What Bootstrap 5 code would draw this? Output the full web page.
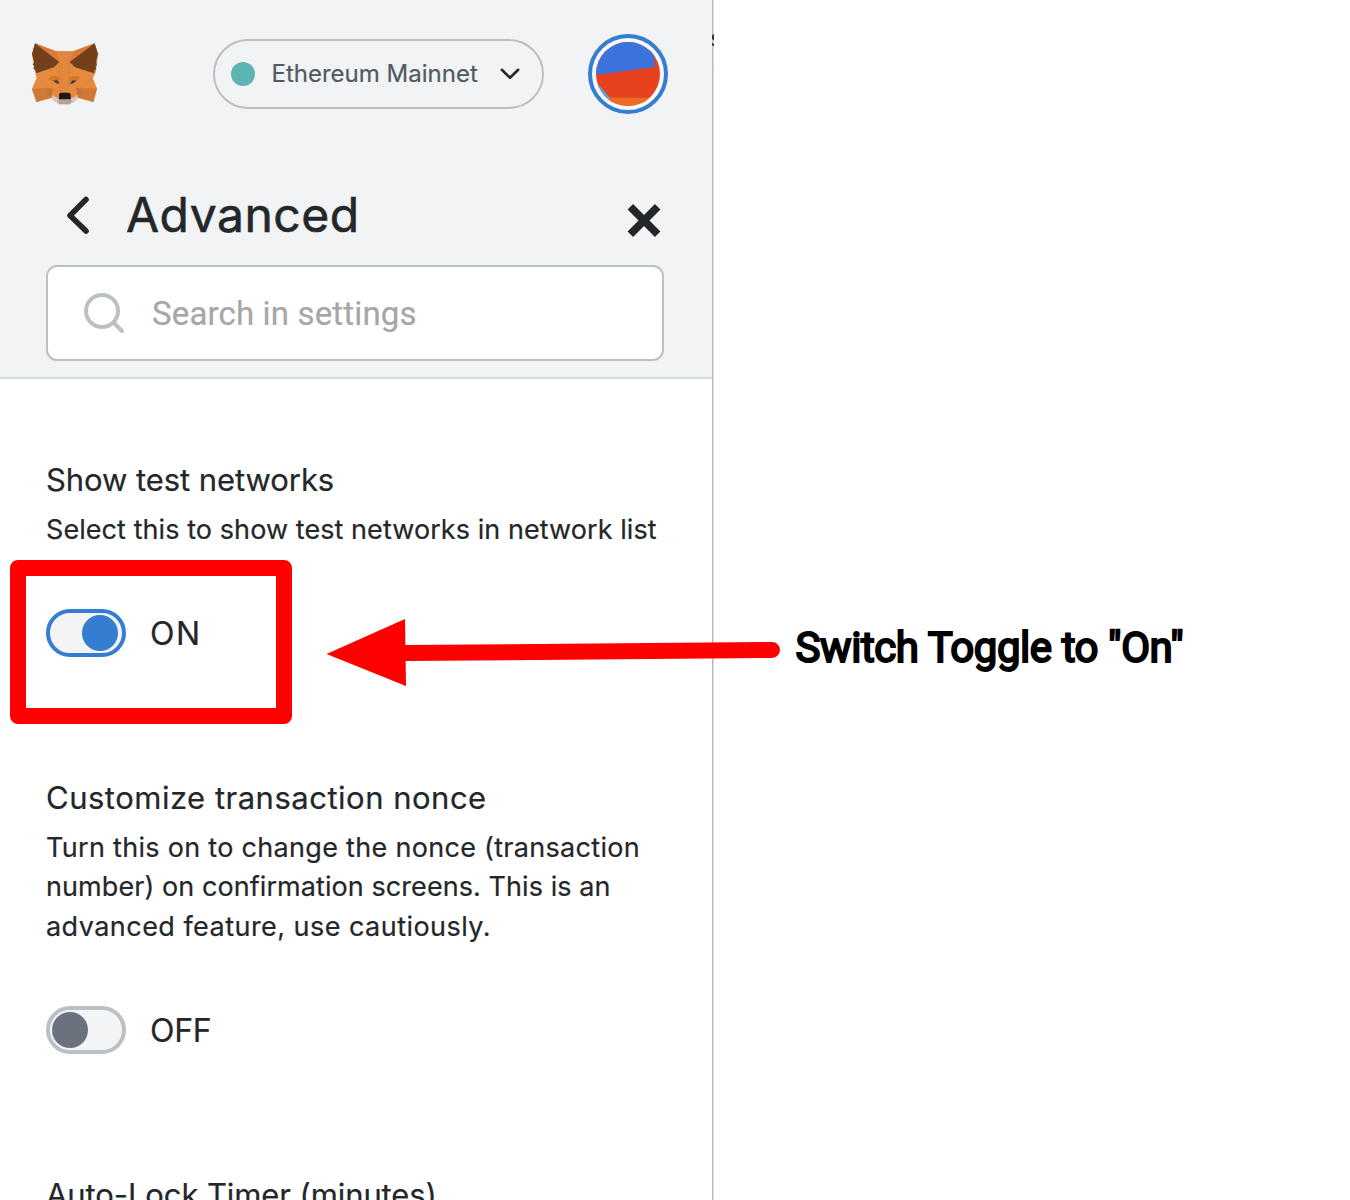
<!DOCTYPE html>
<html lang="en">
<head>
<meta charset="utf-8">
<meta name="viewport" content="width=device-width, initial-scale=1">
<title>Advanced settings</title>
<link rel="stylesheet" href="https://cdn.jsdelivr.net/npm/bootstrap@5.3.0/dist/css/bootstrap.min.css">
<style>
  body { font-family: Inter, sans-serif; color: #24272a; background: #fff; }
  .stage { width: 1350px; height: 1200px; }
  .wallet { width: 714px; height: 1200px; border-right: 1px solid #d8dadc; box-shadow: inset -1px 0 #b9bbbd; -webkit-text-stroke: .2px currentColor; }
  .wallet-head { width: 712px; height: 379px; background: #f2f3f5; border-bottom: 2px solid #d6d9dc; padding: 34px 44px 0 20px; }
  .topbar { height: 80px; }
  .fox-logo { margin-top: 2px; }
  .network { width: 331px; height: 70px; border: 2px solid #bbbec2; margin-left: 103px; padding: 0 22px 0 16px; font-size: 24px; color: #535a61; }
  .net-dot { width: 24px; height: 24px; background: #5cb5b1; }
  .net-name { margin-left: 16.5px; white-space: nowrap; }
  .avatar { width: 80px; height: 80px; }
  .title-row { height: 60px; margin: 71px 4px 0 45px; }
  .title { font-size: 48px; font-weight: 400; letter-spacing: .5px; line-height: 60px; margin: 0 0 0 35px; -webkit-text-stroke: .6px currentColor; }
  .close-x { margin-top: 10px; }
  .search { width: 618px; height: 96px; border: 2px solid #bbc0c5; border-radius: 11px; margin: 20px 0 0 26px; padding-left: 35px; }
  .search-text { font: 400 33px/40px Roboto, sans-serif; color: #a6a6a6; letter-spacing: .15px; margin: 2px 0 0 27px; }
  .setting { padding: 119px 0 0 46px; white-space: nowrap; }
  .setting.first { padding-top: 79px; }
  .setting h2 { font-size: 31px; font-weight: 400; line-height: 44px; margin: 0; letter-spacing: .5px; }
  .desc { font-size: 27px; line-height: 39.5px; margin: 0 0 60px; }
  .first .desc { margin-bottom: 59px; }
  .desc span { display: block; letter-spacing: .46px; }
  .toggle { width: 80px; height: 48px; border: 4px solid #bbc0c5; border-radius: 24px; background: #f2f4f6; padding: 0 2px; }
  .toggle i { width: 36px; height: 36px; border-radius: 50%; background: #6a737d; }
  .toggle.is-on { border-color: #347dd1; padding-right: 4px; }
  .toggle.is-on i { background: #347dd1; }
  .state { font-size: 32px; line-height: 48px; margin-left: 24px; padding-top: 1px; height: 48px; }
  .setting h2.ls-a { letter-spacing: -.07px; } .desc .ls-b { letter-spacing: .07px; } .desc .ls-c { letter-spacing: .3px; }
  .setting h2.ls-d { letter-spacing: -.1px; } .ls-e { letter-spacing: 1.6px; } .ls-f { letter-spacing: -.3px; }
  .notes { padding: 618px 0 0 81.5px; }
  .note-text { font: 400 42px/60px Roboto, sans-serif; color: #000; -webkit-text-stroke: 2px #000; letter-spacing: -.43px; white-space: nowrap; }
  .marker { left: 10px; top: 560px; width: 282px; height: 164px; border: 16px solid #f00; border-radius: 8px; }
  .arrow { left: 320px; top: 610px; }
  .edge-bits { left: 712px; top: 30px; }
</style>
<script src="https://cdn.jsdelivr.net/npm/bootstrap@5.3.0/dist/js/bootstrap.bundle.min.js"></script>
</head>
<body>
<div class="stage d-flex position-relative overflow-hidden">
  <main class="wallet flex-shrink-0 overflow-hidden">
    <header class="wallet-head">
      <div class="topbar d-flex align-items-center">
        <svg class="fox-logo flex-shrink-0" width="90" height="90" viewBox="0 0 270 270" role="img" aria-label="Fox logo">
          <path fill="#e68a3c" d="M45 40L108 64H160L224 40L234 72L227 128L218 144L231 176L220 216L174 203L151 221L116 222L95 203L49 216L36 176L50 144L46 128L36 72Z"/>
          <path fill="#dc7838" d="M45 40L108 64L118 96ZM224 40L160 64L149 96Z"/>
          <path fill="#e08740" d="M108 64H160L149 96L150 140L144 190H123L118 140V96Z"/>
          <path fill="#d27837" d="M36 176L84 174L95 203L49 216ZM231 176L182 174L174 203L220 216Z"/>
          <path fill="#c9733c" d="M84 174H98L95 203L79 194ZM182 174H168L174 203L189 194Z"/>
          <path fill="#d7722f" d="M84 146L94 138L118 140L119 163L84 146ZM182 146L173 138L149 140L147 163L182 146Z"/>
          <path fill="#74401c" d="M45 40L118 96L102 112L49 130L46 120L40 116L43 108L38 105L42 96L36 72ZM224 40L149 96L165 112L222 130L224 120L229 116L226 108L231 105L228 96L234 72Z"/>
          <path fill="#d8c9be" d="M95 195L118 207H151L174 195L170 211L151 223H117L98 211Z"/>
          <path fill="#b5a398" d="M117 207H151L156 212L150 223H118L113 212Z"/>
          <path fill="#191919" d="M122 188H147L152 192V208H117V192Z"/>
          <path fill="#343e49" d="M99 152L112 151L118 163L108 159ZM170 152L157 151L151 163L161 159Z"/>
          <path fill="none" stroke="#c87436" stroke-width="1" opacity=".65" d="M118 96V140L123 188M149 96V140L145 188M84 146L98 174L118 188M182 146L168 174L151 188M50 144L84 174M218 144L182 174"/>
        </svg>
        <div class="network rounded-pill d-flex align-items-center flex-shrink-0">
          <span class="net-dot rounded-circle flex-shrink-0"></span>
          <span class="net-name">Ethereum Mainnet</span>
          <svg class="ms-auto" width="20" height="12" viewBox="0 0 20 12" fill="none" stroke="#24272a" stroke-width="2.6" stroke-linecap="round" stroke-linejoin="round"><path d="M1.8 1.8L10 9.8L18.2 1.8"/></svg>
        </div>
        <svg class="avatar ms-auto flex-shrink-0" viewBox="0 0 80 80">
          <defs><clipPath id="face"><circle cx="40" cy="40" r="32"/></clipPath></defs>
          <circle cx="40" cy="40" r="38" fill="#f8f7f8" stroke="#347dd1" stroke-width="4"/>
          <g clip-path="url(#face)">
            <path fill="#e8411f" d="M0 0H80V80H0Z"/>
            <path fill="#3c74dc" d="M0 0H64L67 33L0 42Z"/>
            <path fill="#eb6a25" d="M20 63.5L80 64V80H20Z"/>
            <path fill="#4fa9ea" d="M4 42L9 49L22 64L18 72L0 60Z"/>
          </g>
        </svg>
      </div>
      <div class="title-row d-flex align-items-center">
        <svg width="26" height="40" viewBox="0 0 26 40" fill="none" stroke="#24272a" stroke-width="5.6" stroke-linecap="round" stroke-linejoin="round"><path d="M21 4.5L5 20.5L21 36"/></svg>
        <h1 class="title">Advanced</h1>
        <svg class="close-x ms-auto" width="40" height="40" viewBox="0 0 40 40" stroke="#24272a" stroke-width="7.8"><path d="M6.3 6.8L33.7 34.2M33.7 6.8L6.3 34.2"/></svg>
      </div>
      <div class="search bg-white d-flex align-items-center">
        <svg width="42" height="42" viewBox="0 0 42 42" fill="none" stroke="#bbc0c5" stroke-width="4"><circle cx="19" cy="19" r="16"/><path stroke-linecap="round" d="M31 31L39 39"/></svg>
        <span class="search-text">Search in settings</span>
      </div>
    </header>

    <section class="setting first">
      <h2 class="ls-a">Show test networks</h2>
      <p class="desc mt-2"><span class="ls-b">Select this to show test networks in network list</span></p>
      <div class="d-flex"><div class="toggle is-on d-flex align-items-center justify-content-end"><i></i></div><span class="state ls-e">ON</span></div>
    </section>
    <section class="setting">
      <h2>Customize transaction nonce</h2>
      <p class="desc mt-2"><span class="ls-c">Turn this on to change the nonce (transaction</span><span class="ls-b">number) on confirmation screens. This is an</span><span>advanced feature, use cautiously.</span></p>
      <div class="d-flex"><div class="toggle d-flex align-items-center"><i></i></div><span class="state ls-f">OFF</span></div>
    </section>
    <section class="setting">
      <h2 class="ls-d">Auto-Lock Timer (minutes)</h2>
    </section>
  </main>

  <aside class="notes"><div class="note-text">Switch Toggle to "On"</div></aside>

  <svg class="edge-bits position-absolute" width="2" height="44" viewBox="0 0 2 44"><path d="M3 5.2Q.8 5 .8 7Q.8 9 3 9.6M0 13.4Q1 15.2 3 15.3" fill="none" stroke="#24272a" stroke-width="1.9"/><path d="M0 41H2" stroke="#c4c6c8" stroke-width="2"/></svg>
  <div class="marker position-absolute"></div>
  <svg class="arrow position-absolute" width="470" height="84" viewBox="0 0 470 84"><path d="M6.5 44L85 9L86 76Z" fill="#f00"/><path d="M84 43L452 40" stroke="#f00" stroke-width="16" stroke-linecap="round"/></svg>
</div>
</body>
</html>
